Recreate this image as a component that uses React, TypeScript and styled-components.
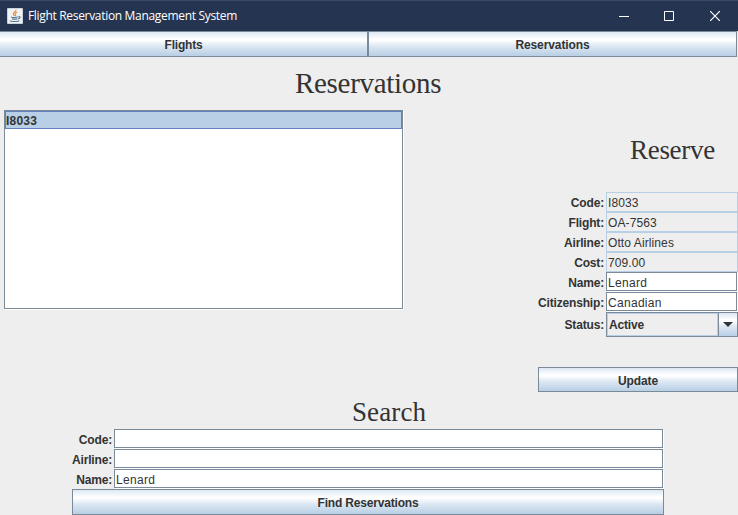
import React from "react";
import styled, { createGlobalStyle, css } from "styled-components";

const edge = "#7a8a99";
const pale = "#b8cfe5";

const GlobalStyle = createGlobalStyle`
  * { box-sizing: border-box; }
  html, body { margin: 0; padding: 0; }
  body {
    background: #eeeeee;
    color: #333333;
    font: bold 12px/14px "Liberation Sans", Arial, sans-serif;
    overflow: hidden;
  }
`;

const Window = styled.div`
  width: 738px;
  height: 515px;
  display: flex;
  flex-direction: column;
  overflow: hidden;
  background: #eeeeee;
`;

const TitleBar = styled.header`
  flex: none;
  height: 31px;
  display: flex;
  align-items: center;
  padding-left: 7px;
  background: #253551;
  border-top: 1px solid #3a4a63;
  color: #ffffff;
`;

const Caption = styled.span`
  margin-left: 5px;
  flex: 1;
  font: 400 12px/16px "Open Sans", "Noto Sans", sans-serif;
  letter-spacing: -0.32px;
  white-space: nowrap;
`;

const WindowControl = styled.span`
  width: 45.5px;
  height: 30px;
  display: flex;
  align-items: center;
  justify-content: center;

  &:last-child {
    width: 46px;
  }
`;

const Button = styled.button<{ $width: number; $height?: number; $spacing?: number }>`
  flex: none;
  display: block;
  width: ${(p) => p.$width}px;
  height: ${(p) => p.$height ?? 26}px;
  margin: 0;
  padding: 2px 0 0;
  border: 1px solid ${edge};
  border-radius: 0;
  background: linear-gradient(#dde8f3 0%, #ffffff 30%, #ffffff 34%, #dde8f3 58%, #b8cfe5 100%);
  color: #333333;
  font: inherit;
  letter-spacing: ${(p) => p.$spacing ?? -0.1}px;
`;

const Nav = styled.nav`
  flex: none;
  display: flex;
  margin-left: -1px;
`;

const Heading = styled.h1<{ $size: number; $spacing?: number }>`
  margin: 0;
  font: 400 ${(p) => p.$size}px/34px "Liberation Serif", "Times New Roman", serif;
  letter-spacing: ${(p) => p.$spacing ?? 0}px;
  white-space: nowrap;
`;

const PageHeader = styled.div`
  flex: none;
  height: 53px;
  padding: 9px 0 0 295px;
`;

const Content = styled.main`
  flex: none;
  height: 284px;
  display: flex;
  justify-content: space-between;
`;

const flush = css`
  border: 1px solid ${edge};
  background: #ffffff;
  box-shadow: 1px 1px 0 #ffffff;
`;

const ReservationList = styled.div`
  ${flush}
  width: 399px;
  height: 199px;
  margin-left: 4px;
`;

const ListItem = styled.div`
  height: 18px;
  padding: 2px 0 0 1px;
  background: ${pale};
  border: 1px solid #6382bf;
  border-left-width: 0;
  box-shadow: inset 1px 0 #6382bf;
  letter-spacing: 0.2px;
`;

const Details = styled.section`
  width: 200px;
  display: flex;
  flex-direction: column;
`;

const DetailsTitle = styled.div`
  height: 82px;
  padding: 23px 0 0 92px;
`;

const Row = styled.div<{ $height?: number; $label: number }>`
  display: grid;
  grid-template-columns: ${(p) => p.$label}px 1fr;
  height: ${(p) => p.$height ?? 20}px;
  align-items: center;
  column-gap: 2px;
`;

const Label = styled.label`
  display: flex;
  justify-content: flex-end;
  padding-top: 1px;
  letter-spacing: -0.17px;
  white-space: nowrap;
`;

const Field = styled.div<{ $editable?: boolean }>`
  height: 20px;
  padding: 3px 0 0 1px;
  font-weight: 400;
  letter-spacing: 0.1px;
  border: 1px solid ${pale};
  white-space: nowrap;
  ${(p) => p.$editable && css`
    ${flush}
    height: 19px;
    margin: 0 1px 1px 0;
    letter-spacing: 0.3px;
  `}
`;

const Select = styled.div`
  height: 25px;
  display: flex;
  border: 1px solid ${edge};
`;

const SelectValue = styled.div`
  flex: 1;
  padding: 4px 0 0 1px;
  border: 1px solid ${pale};
  letter-spacing: -0.17px;
`;

const SelectArrow = styled.div`
  width: 19px;
  padding: 9px 0 0 4px;
  border-left: 1px solid ${edge};
  background: linear-gradient(#dde8f3 0%, #ffffff 30%, #ffffff 34%, #dde8f3 58%, #b8cfe5 100%);
  line-height: 0;
`;

const UpdateArea = styled.div`
  margin-top: 30px;
`;

const SearchPanel = styled.section`
  flex: none;
  width: 592px;
  margin-left: 72px;
`;

const SearchTitle = styled.div`
  height: 35px;
  padding: 1px 0 0 280px;
`;

const JavaIcon = () => (
  <svg width="16" height="16" viewBox="0 0 16 16">
    <rect width="16" height="16" rx="1" fill="#c9d3dc" />
    <rect x="1" y="1" width="14" height="14" fill="#eef2f5" />
    <path d="M8.9 1.8c.7 1.7-3 2.5-2.6 4.3.1.6.8 1.2 1.1 1.8M10.4 4c-2 .8-2.7 1.7-1.9 2.6.5.5.2 1-.3 1.5" fill="none" stroke="#ed8c3b" strokeWidth="1.2" />
    <path d="M4.7 8.7c-1.6.9 5.1 1 6.2.2M5 10.7c1.1.6 4.2.6 5.2 0M3.3 12.5c-1.2 1.3 8.5 1.5 9.1 0M11.4 8.7c2.6-.7 2.1 2-.4 2.2" fill="none" stroke="#58788f" strokeWidth="1.1" />
  </svg>
);

const ControlIcon = ({ kind }: { kind: "minimize" | "maximize" | "close" }) => (
  <svg width="10" height="10" viewBox="0 0 10 10" fill="none" stroke="#fff">
    {kind === "minimize" && <path d="M0 5.5H10" />}
    {kind === "maximize" && <path d="M.5.5H9.5V9.5H.5Z" />}
    {kind === "close" && <path d="M0 0L10 10M10 0L0 10" strokeWidth="1.2" />}
  </svg>
);

const details = [
  { label: "Code:", value: "I8033" },
  { label: "Flight:", value: "OA-7563" },
  { label: "Airline:", value: "Otto Airlines" },
  { label: "Cost:", value: "709.00" },
  { label: "Name:", value: "Lenard", editable: true },
  { label: "Citizenship:", value: "Canadian", editable: true },
];

const criteria = [
  { label: "Code:", value: "" },
  { label: "Airline:", value: "" },
  { label: "Name:", value: "Lenard" },
];

export default function App() {
  return (
    <Window>
      <GlobalStyle />
      <TitleBar>
        <JavaIcon />
        <Caption>Flight Reservation Management System</Caption>
        <WindowControl><ControlIcon kind="minimize" /></WindowControl>
        <WindowControl><ControlIcon kind="maximize" /></WindowControl>
        <WindowControl><ControlIcon kind="close" /></WindowControl>
      </TitleBar>
      <Nav>
        <Button $width={369} $spacing={-0.2}>Flights</Button>
        <Button $width={369}>Reservations</Button>
      </Nav>
      <PageHeader><Heading $size={29} $spacing={-0.3}>Reservations</Heading></PageHeader>
      <Content>
        <ReservationList><ListItem>I8033</ListItem></ReservationList>
        <Details>
          <DetailsTitle><Heading $size={27} $spacing={-0.3}>Reserve</Heading></DetailsTitle>
          {details.map((d) => (
            <Row key={d.label} $label={66}>
              <Label>{d.label}</Label>
              <Field $editable={d.editable}>{d.value}</Field>
            </Row>
          ))}
          <Row $label={66} $height={25}>
            <Label>Status:</Label>
            <Select>
              <SelectValue>Active</SelectValue>
              <SelectArrow>
                <svg width="10" height="5" viewBox="0 0 10 5"><path d="M0 0H10L5 5Z" fill="#333" /></svg>
              </SelectArrow>
            </Select>
          </Row>
          <UpdateArea><Button $width={200} $height={25}>Update</Button></UpdateArea>
        </Details>
      </Content>
      <SearchPanel>
        <SearchTitle><Heading $size={27} $spacing={0.1}>Search</Heading></SearchTitle>
        {criteria.map((c) => (
          <Row key={c.label} $label={40}>
            <Label>{c.label}</Label>
            <Field $editable>{c.value}</Field>
          </Row>
        ))}
        <Button $width={592} $spacing={-0.18}>Find Reservations</Button>
      </SearchPanel>
    </Window>
  );
}
